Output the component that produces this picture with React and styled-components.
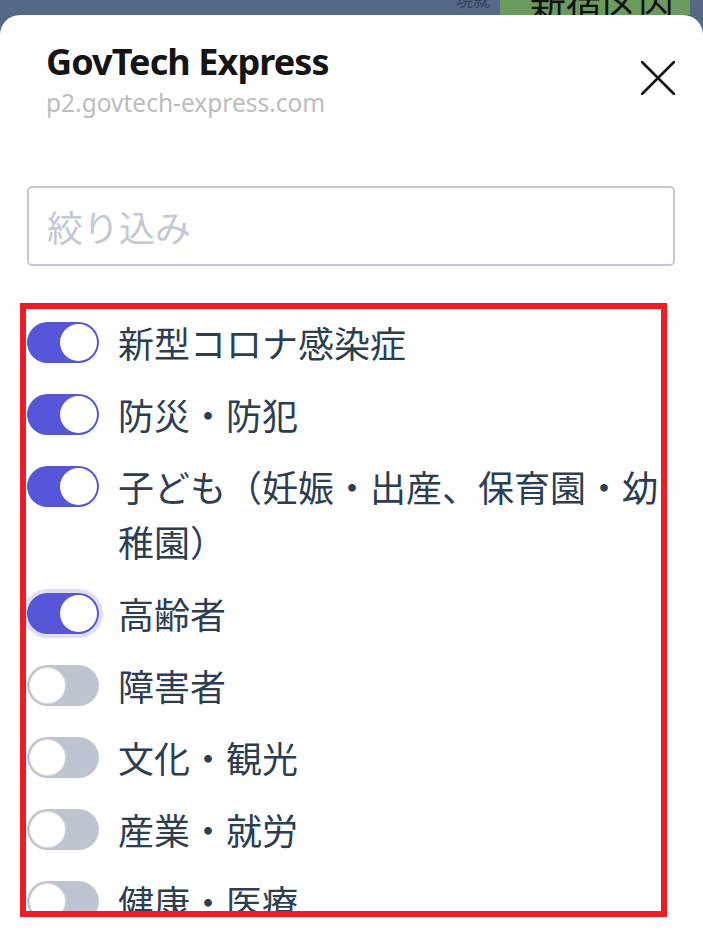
import React, { useState } from 'react';
import styled, { createGlobalStyle } from 'styled-components';

const GlobalStyle = createGlobalStyle`
  html, body {
    margin: 0;
    padding: 0;
    background: #566888;
  }
  * {
    box-sizing: border-box;
  }
`;

const Page = styled.div`
  display: flex;
  flex-direction: column;
  min-height: 100vh;
  font-family: "Noto Sans", "Noto Sans CJK JP", sans-serif;
`;

const Backdrop = styled.div`
  display: flex;
  justify-content: flex-end;
  height: 15px;
  overflow: hidden;
  padding-right: 13px;
`;

const Clock = styled.div`
  display: flex;
  flex-direction: column;
  align-items: flex-end;
  margin-top: -12px;
  margin-right: 10px;
  font-family: "Noto Sans CJK JP", sans-serif;
  font-size: 17px;
  line-height: 21px;
  color: #34435c;
`;

const Area = styled.div`
  display: flex;
  align-items: flex-end;
  width: 190px;
  padding-left: 30px;
  background: #6a9a5e;
  font-family: "Noto Sans CJK JP", sans-serif;
  font-size: 36px;
  line-height: 36px;
  color: #111;
`;

const AreaText = styled.span`
  margin-bottom: -6px;
`;

const Sheet = styled.div`
  display: flex;
  flex-direction: column;
  flex: 1;
  background: #fff;
  border-radius: 20px 20px 0 0;
`;

const Header = styled.div`
  display: flex;
  justify-content: space-between;
  align-items: flex-start;
  padding: 25px 28px 0 46px;
`;

const TitleBlock = styled.div`
  display: flex;
  flex-direction: column;
`;

const Title = styled.h1`
  margin: 0;
  font-size: 36px;
  line-height: 44px;
  font-weight: 700;
  color: #151515;
  letter-spacing: -0.9px;
`;

const Domain = styled.div`
  margin-top: 5px;
  font-size: 24.5px;
  line-height: 28px;
  color: #bdbdbd;
`;

const CloseButton = styled.button`
  display: flex;
  padding: 0;
  margin-top: 21px;
  border: none;
  background: none;
  cursor: pointer;
`;

const Filter = styled.input`
  margin: 69px 28px 0 27px;
  height: 80px;
  padding: 0 18px;
  border: 2px solid #c3c9d4;
  border-radius: 5px;
  font-family: "Noto Sans CJK JP", sans-serif;
  font-size: 36px;
  color: #2c3e50;
  outline: none;

  &::placeholder {
    color: #c3c9d4;
  }
`;

const ListFrame = styled.div`
  display: flex;
  flex-direction: column;
  gap: 17px;
  margin: 37px 36px 0 20px;
  height: 614px;
  padding: 6px 0 0 1px;
  border: 6px solid #ee1c25;
  overflow: hidden;
`;

const Row = styled.label`
  display: flex;
  align-items: flex-start;
  gap: 19px;
  flex-shrink: 0;
  cursor: pointer;
`;

const Track = styled.span`
  position: relative;
  flex-shrink: 0;
  width: 72px;
  height: 41px;
  margin-top: 7px;
  border-radius: 21px;
  background: ${(p) => (p.$on ? '#5856d8' : '#bfc5d0')};
  box-shadow: ${(p) => (p.$focus ? '0 0 0 4px #dfdff8' : 'none')};
`;

const Knob = styled.span`
  position: absolute;
  top: 2px;
  left: ${(p) => (p.$on ? '33px' : '2px')};
  width: 37px;
  height: 37px;
  border-radius: 50%;
  background: #fff;
  border: ${(p) => (p.$on ? 'none' : '1px solid #d6dae2')};
`;

const Label = styled.span`
  font-family: "Noto Sans CJK JP", sans-serif;
  font-size: 36px;
  line-height: 55px;
  color: #2c3e50;
  word-break: break-all;
  line-break: anywhere;
`;

const categories = [
  { name: '新型コロナ感染症', on: true },
  { name: '防災・防犯', on: true },
  { name: '子ども（妊娠・出産、保育園・幼稚園）', on: true },
  { name: '高齢者', on: true, focus: true },
  { name: '障害者', on: false },
  { name: '文化・観光', on: false },
  { name: '産業・就労', on: false },
  { name: '健康・医療', on: false },
  { name: '暮らし', on: false },
];

function Toggle({ on, focus }) {
  return (
    <Track $on={on} $focus={focus}>
      <Knob $on={on} />
    </Track>
  );
}

export default function App() {
  const [query, setQuery] = useState('');

  return (
    <Page>
      <GlobalStyle />
      <Backdrop>
        <Clock>
          <span>現就</span>
          <span>10:50</span>
        </Clock>
        <Area>
          <AreaText>新宿区内</AreaText>
        </Area>
      </Backdrop>
      <Sheet>
        <Header>
          <TitleBlock>
            <Title>GovTech Express</Title>
            <Domain>p2.govtech-express.com</Domain>
          </TitleBlock>
          <CloseButton aria-label="閉じる">
            <svg width="34" height="34" viewBox="0 0 34 34">
              <path d="M1 1 L33 33 M33 1 L1 33" stroke="#151515" strokeWidth="2.6" strokeLinecap="round" />
            </svg>
          </CloseButton>
        </Header>
        <Filter
          type="text"
          value={query}
          onChange={(e) => setQuery(e.target.value)}
          placeholder="絞り込み"
        />
        <ListFrame>
          {categories.map((c) => (
            <Row key={c.name}>
              <Toggle on={c.on} focus={c.focus} />
              <Label>{c.name}</Label>
            </Row>
          ))}
        </ListFrame>
      </Sheet>
    </Page>
  );
}
